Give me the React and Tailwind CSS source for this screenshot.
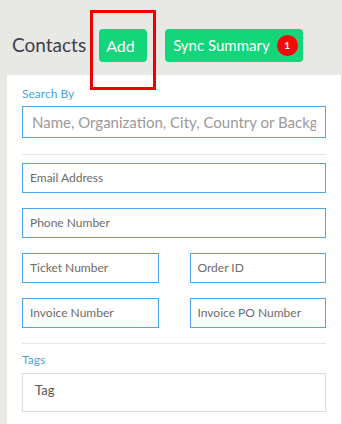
export default function App() {
  const input = "h-[30px] border border-[#4aa8e8] flex items-center pl-[7px] text-[12px] text-[#6e6a6a] bg-white";
  return (
    <div className="w-[342px] h-[424px] bg-[#e8e8e4] overflow-hidden relative" style={{ fontFamily: "Lato, 'Open Sans', sans-serif" }}>
      <div className="h-[75px] flex items-start">
        <div className="ml-[12px] mt-[33px] text-[19px] leading-[24px] text-[#3f3d4a]">Contacts</div>
        <div className="ml-[13px] mt-[29px] h-[33px] w-[48px] rounded-[4px] bg-[#13d67a] text-white text-[16px] flex items-center pl-[7px]">Add</div>
        <div className="ml-[18px] mt-[29px] h-[33px] w-[138px] rounded-[4px] bg-[#13d67a] text-white text-[15px] flex items-center pl-[8px] whitespace-nowrap">
          <span>Sync Summary</span>
          <span className="ml-[7px] shrink-0 w-[21px] h-[21px] rounded-full bg-[#f20a0a] text-white text-[10px] font-bold flex items-center justify-center">1</span>
        </div>
      </div>
      <div className="absolute left-[90px] top-[10px] w-[66px] h-[80px] border-[3px] border-[#f20000]"></div>
      <div className="ml-[7px] w-[335px] h-[349px] bg-white border-r border-[#dcdcdc] px-[15px] pt-[12px]">
        <div className="text-[12px] leading-[14px] text-[#4aa3e0]">Search By</div>
        <div className="mt-[5px] h-[32px] border border-[#4aa8e8] flex items-center pl-[9px] pr-[9px] text-[15px] text-[#9a9a9a] overflow-hidden">
          <span className="block whitespace-nowrap overflow-hidden">Name, Organization, City, Country or Background</span>
        </div>
        <div className="mt-[16px] h-px bg-[#e6e6e6]"></div>
        <div className={"mt-[8px] " + input}>Email Address</div>
        <div className={"mt-[15px] " + input}>Phone Number</div>
        <div className="mt-[15px] grid grid-cols-2 gap-x-[31px] gap-y-[15px]">
          <div className={input}>Ticket Number</div>
          <div className={input}>Order ID</div>
          <div className={input}>Invoice Number</div>
          <div className={input}>Invoice PO Number</div>
        </div>
        <div className="mt-[15px] h-px bg-[#e6e6e6]"></div>
        <div className="mt-[9px] text-[12px] leading-[14px] text-[#4aa3e0]">Tags</div>
        <div className="mt-[6px] h-[39px] border border-[#dcdcdc] flex items-center pl-[12px] pb-[4px] text-[13px] text-[#555]">Tag</div>
      </div>
    </div>
  );
}
